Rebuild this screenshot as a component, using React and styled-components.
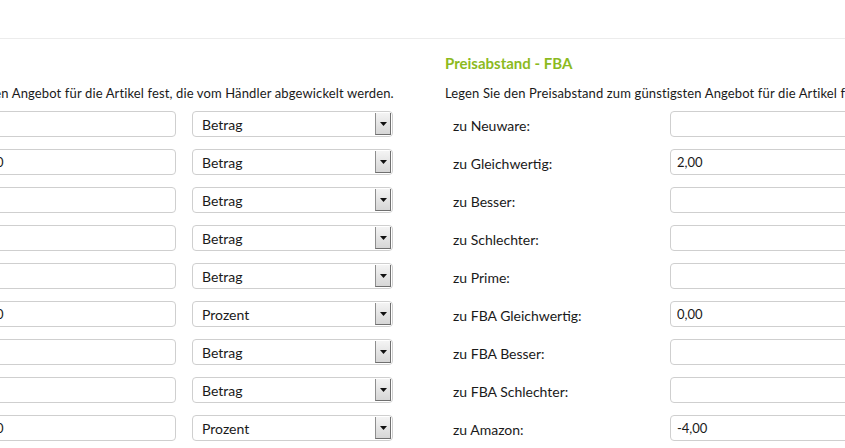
import React from "react";
import styled, { createGlobalStyle } from "styled-components";

const GlobalStyle = createGlobalStyle`
  html, body {
    margin: 0;
    padding: 0;
    background: #fff;
  }
  body {
    font-family: "Lato", "Liberation Sans", sans-serif;
    color: #1a1a1a;
  }
`;

const leftRows = [
  { label: "zu Neuware:", value: "", unit: "Betrag" },
  { label: "zu Gleichwertig:", value: "2,00", unit: "Betrag" },
  { label: "zu Besser:", value: "", unit: "Betrag" },
  { label: "zu Schlechter:", value: "", unit: "Betrag" },
  { label: "zu Prime:", value: "", unit: "Betrag" },
  { label: "zu FBA Gleichwertig:", value: "0,00", unit: "Prozent" },
  { label: "zu FBA Besser:", value: "", unit: "Betrag" },
  { label: "zu FBA Schlechter:", value: "", unit: "Betrag" },
  { label: "zu Amazon:", value: "0,00", unit: "Prozent" },
];

const rightRows = [
  { label: "zu Neuware:", value: "" },
  { label: "zu Gleichwertig:", value: "2,00" },
  { label: "zu Besser:", value: "" },
  { label: "zu Schlechter:", value: "" },
  { label: "zu Prime:", value: "" },
  { label: "zu FBA Gleichwertig:", value: "0,00" },
  { label: "zu FBA Besser:", value: "" },
  { label: "zu FBA Schlechter:", value: "" },
  { label: "zu Amazon:", value: "-4,00" },
];

export default function App() {
  return (
    <Root>
      <GlobalStyle />
      <TopBar />
      <Columns>
        <Column width={641}>
          <Heading>Preisabstand - Händler</Heading>
          <Description>
            Legen Sie den Preisabstand zum günstigsten Angebot für die Artikel
            fest, die vom Händler abgewickelt werden.
          </Description>
          <Rows>
            {leftRows.map((row, i) => (
              <Row key={i} labelWidth={203} withSelect>
                <Label>{row.label}</Label>
                <TextInput type="text" defaultValue={row.value} />
                <SelectBox>
                  <select defaultValue={row.unit}>
                    <option>Betrag</option>
                    <option>Prozent</option>
                  </select>
                  <Arrow>
                    <svg width="7" height="4" viewBox="0 0 7 4">
                      <path d="M0 0h7L3.5 4z" fill="#111" />
                    </svg>
                  </Arrow>
                </SelectBox>
              </Row>
            ))}
          </Rows>
        </Column>
        <Column width={560}>
          <Heading>Preisabstand - FBA</Heading>
          <Description>
            Legen Sie den Preisabstand zum günstigsten Angebot für die Artikel
            fest, die von Amazon abgewickelt werden.
          </Description>
          <Rows>
            {rightRows.map((row, i) => (
              <Row key={i} labelWidth={209}>
                <Label>{row.label}</Label>
                <TextInput type="text" defaultValue={row.value} />
              </Row>
            ))}
          </Rows>
        </Column>
      </Columns>
    </Root>
  );
}

const Root = styled.div`
  width: 845px;
  height: 448px;
  overflow: hidden;
`;

const TopBar = styled.div`
  height: 38px;
  border-bottom: 1px solid #ececec;
`;

/* page is scrolled sideways: the left column starts off screen */
const Columns = styled.div`
  display: flex;
  gap: 52px;
  margin-left: -248px;
  padding-top: 14px;
`;

const Column = styled.div`
  flex: 0 0 ${(p) => p.width}px;
  min-width: 0;
  display: flex;
  flex-direction: column;
`;

const Heading = styled.h3`
  margin: 0;
  font-size: 15px;
  font-weight: 700;
  color: #8cba1e;
  line-height: 20px;
  white-space: nowrap;
`;

const Description = styled.p`
  margin: 10px 0 0;
  font-size: 13px;
  letter-spacing: 0.13px;
  line-height: 20px;
  white-space: nowrap;
`;

const Rows = styled.div`
  display: flex;
  flex-direction: column;
  gap: 12px;
  margin-top: 8px;
`;

const Row = styled.div`
  display: grid;
  grid-template-columns: ${(p) =>
    p.withSelect ? `${p.labelWidth}px 1fr 201px` : `${p.labelWidth}px 1fr`};
  column-gap: 16px;
  align-items: center;
  height: 26px;
`;

const Label = styled.span`
  padding: 3px 0 0 8px;
  font-size: 14px;
  white-space: nowrap;
`;

const TextInput = styled.input`
  box-sizing: border-box;
  height: 26px;
  width: 100%;
  border: 1px solid #cfcfcf;
  border-radius: 4px;
  padding: 0 6px;
  font-family: inherit;
  font-size: 13px;
  color: #1a1a1a;
  outline: none;
`;

const SelectBox = styled.div`
  box-sizing: border-box;
  height: 26px;
  display: flex;
  align-items: stretch;
  border: 1px solid #cfcfcf;
  border-radius: 4px;
  padding: 1px 1px 1px 0;
  background: #fff;

  select {
    flex: 1;
    appearance: none;
    border: none;
    background: transparent;
    padding: 0 0 0 9px;
    font-family: inherit;
    font-size: 14px;
    color: #1a1a1a;
    outline: none;
  }
`;

const Arrow = styled.span`
  width: 14px;
  display: flex;
  align-items: center;
  justify-content: center;
  border-left: 1px solid #8e8e8e;
  border-right: 1px solid #6f6f6f;
  border-bottom: 1px solid #6f6f6f;
  background: linear-gradient(#f4f4f4, #d6d6d6);
`;
